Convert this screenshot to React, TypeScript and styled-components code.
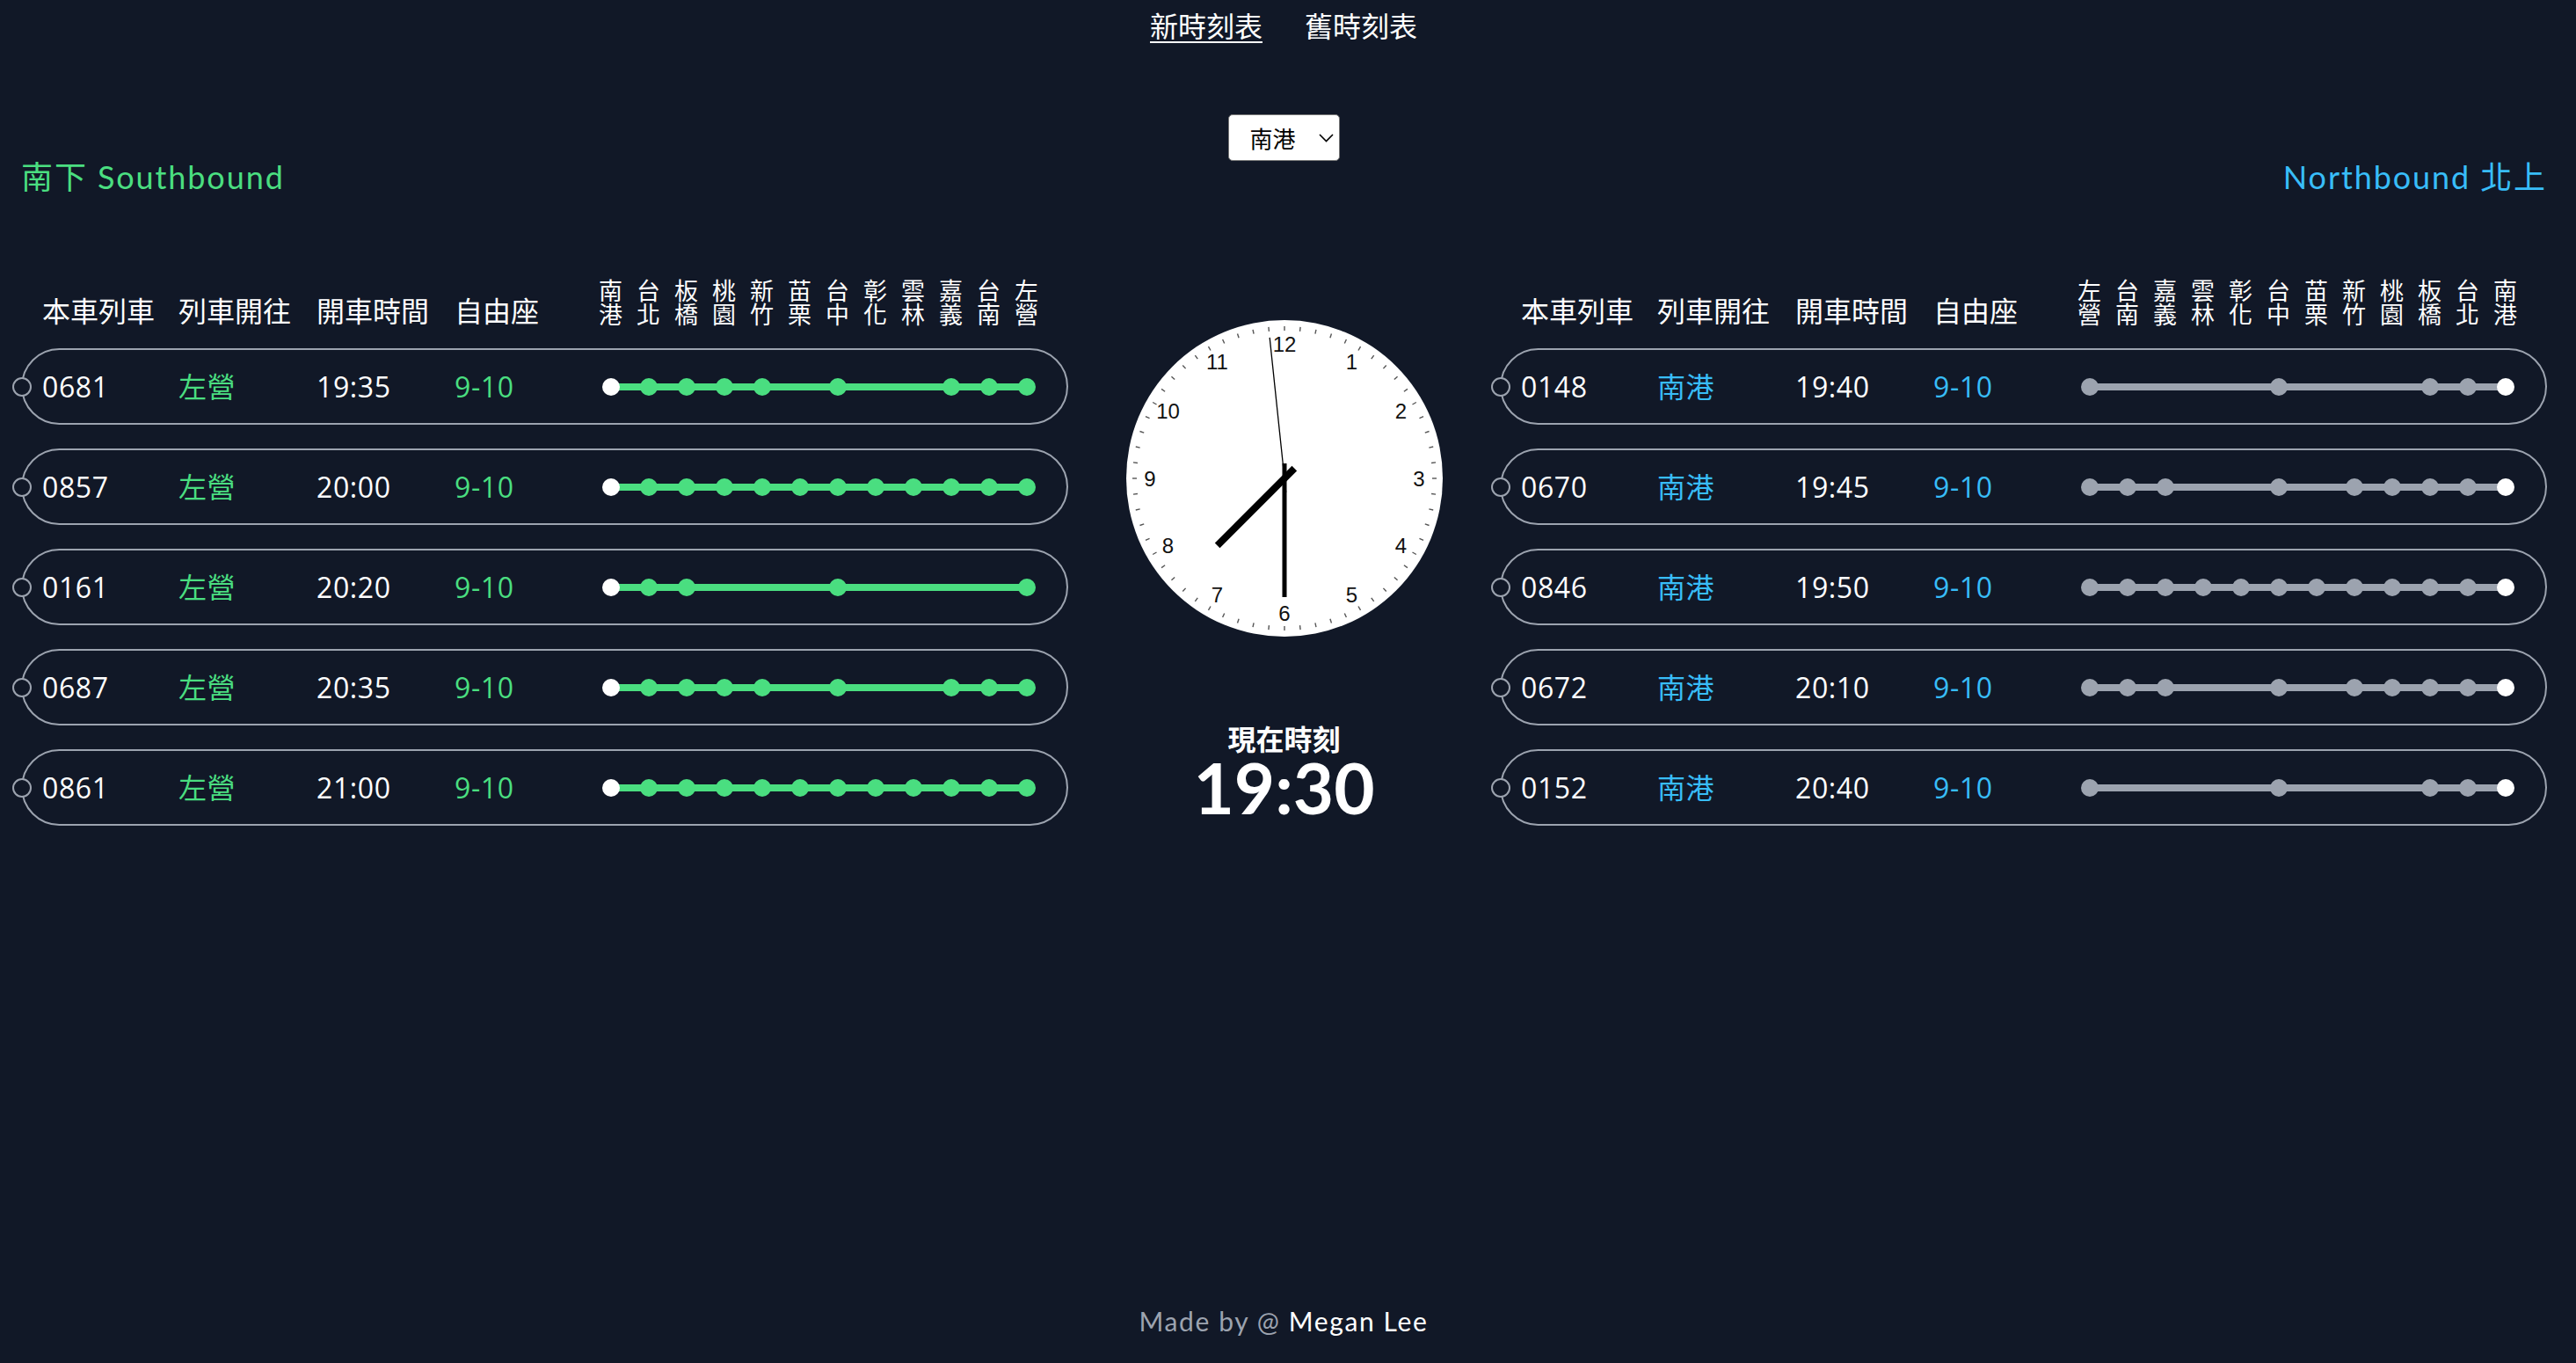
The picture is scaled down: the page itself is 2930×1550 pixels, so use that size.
import React from "react";
import styled, { createGlobalStyle } from "styled-components";

const GREEN = "#4ade80";
const BLUE = "#38bdf8";
const GRAY = "#9ca3af";
const BG = "#111827";
const CJK = `"Noto Sans CJK TC", "Noto Sans CJK SC", sans-serif`;

const GlobalStyle = createGlobalStyle`
  html, body { margin: 0; padding: 0; background: ${BG}; }
  body { font-family: "Lato", ${CJK}; color: #fff; }
  * { box-sizing: border-box; }
`;

const Page = styled.div`
  width: 2920px;
  min-height: 1550px;
  display: flex;
  flex-direction: column;
`;

const Nav = styled.nav`
  display: flex;
  justify-content: center;
  gap: 48px;
  padding-top: 9px;
`;

const NavLink = styled.a<{ $active?: boolean }>`
  font-family: ${CJK};
  font-size: 32px;
  line-height: 38px;
  color: #fff;
  text-decoration: none;
  border-bottom: 2px solid ${(p) => (p.$active ? "#fff" : "transparent")};
  cursor: pointer;
`;

const SelectRow = styled.div`
  display: flex;
  justify-content: center;
  margin-top: 81px;
`;

const SelectWrap = styled.div`
  position: relative;
  width: 127px;
  height: 53px;
`;

const StationSelect = styled.select`
  appearance: none;
  -webkit-appearance: none;
  width: 100%;
  height: 100%;
  margin: 0;
  border: 1px solid #767676;
  border-radius: 5px;
  background: #fff;
  color: #000;
  font-family: ${CJK};
  font-size: 26px;
  padding: 0 0 0 24px;
  outline: none;
`;

const Chevron = styled.svg`
  position: absolute;
  right: 7px;
  top: 22px;
  width: 17px;
  height: 10px;
  pointer-events: none;
`;

const Board = styled.main`
  display: grid;
  grid-template-columns: 1191px 491px 1191px;
  padding-left: 24px;
  align-items: start;
`;

const Panel = styled.section`
  display: flex;
  flex-direction: column;
`;

const DirTitle = styled.h2<{ $color: string; $align: "left" | "right" }>`
  margin: 0;
  font-family: "Lato", ${CJK};
  font-weight: 400;
  font-size: 36px;
  line-height: 36px;
  letter-spacing: 1.9px;
  color: ${(p) => p.$color};
  text-align: ${(p) => p.$align};
`;

const COLS = "155px 157px 157px 156px 516px";

const HeaderRow = styled.div`
  display: grid;
  grid-template-columns: ${COLS};
  align-items: end;
  padding-left: 24px;
  margin-top: 97px;
`;

const HeaderCell = styled.div`
  font-family: ${CJK};
  font-size: 32px;
  line-height: 32px;
  color: #fff;
  white-space: nowrap;
`;

const StationHeads = styled.div`
  display: grid;
  grid-template-columns: repeat(12, 43px);
  margin-bottom: -2px;
`;

const StationName = styled.div`
  display: flex;
  flex-direction: column;
  align-items: center;
  font-family: ${CJK};
  font-size: 27px;
  line-height: 27px;
  color: #fff;
`;

const Rows = styled.div`
  display: flex;
  flex-direction: column;
  gap: 27px;
  margin-top: 28px;
`;

const Row = styled.div`
  position: relative;
  height: 87px;
  border: 2px solid ${GRAY};
  border-radius: 9999px;
  display: grid;
  grid-template-columns: ${COLS};
  align-items: center;
  padding-left: 22px;
`;

const Pin = styled.span`
  position: absolute;
  left: -12px;
  top: 50%;
  width: 22px;
  height: 22px;
  margin-top: -11px;
  border-radius: 50%;
  border: 2px solid ${GRAY};
  background: ${BG};
`;

const Cell = styled.div<{ $color?: string }>`
  font-family: "Open Sans", ${CJK};
  font-size: 32px;
  line-height: 40px;
  letter-spacing: 0.6px;
  color: ${(p) => p.$color || "#fff"};
  white-space: nowrap;
`;

const Track = styled.div<{ $color: string }>`
  position: relative;
  display: grid;
  grid-template-columns: repeat(12, 43px);
  height: 20px;
  align-items: center;
  &::before {
    content: "";
    position: absolute;
    left: 21.5px;
    right: 21.5px;
    top: 6px;
    height: 8px;
    background: ${(p) => p.$color};
  }
`;

const Stop = styled.span<{ $color: string }>`
  position: relative;
  justify-self: center;
  width: 20px;
  height: 20px;
  border-radius: 50%;
  background: ${(p) => p.$color};
`;

const Center = styled.div`
  display: flex;
  flex-direction: column;
  align-items: center;
  padding-top: 181px;
`;

const ClockSvg = styled.svg`
  display: block;
  width: 360px;
  height: 360px;
`;

const NowLabel = styled.div`
  margin-top: 99px;
  font-family: ${CJK};
  font-weight: 700;
  font-size: 32px;
  line-height: 32px;
`;

const NowTime = styled.div`
  font-family: "Lato", sans-serif;
  font-weight: 700;
  font-size: 80px;
  line-height: 80px;
`;

const Footer = styled.footer`
  margin-top: auto;
  padding-bottom: 27px;
  text-align: center;
  font-family: "Lato", sans-serif;
  font-size: 30px;
  line-height: 42px;
  letter-spacing: 1.6px;
  color: ${GRAY};
`;

const Author = styled.span`
  color: #fff;
`;

const SOUTH = ["南港", "台北", "板橋", "桃園", "新竹", "苗栗", "台中", "彰化", "雲林", "嘉義", "台南", "左營"];
const NORTH = [...SOUTH].reverse();
const ALL = Array.from({ length: 12 }, (_, i) => i);
const A = [0, 1, 2, 3, 4, 6, 9, 10, 11];
const B = [0, 5, 9, 10, 11];
const C = [0, 1, 2, 5, 7, 8, 9, 10, 11];

type Train = { no: string; time: string; stops: number[] };

const southTrains: Train[] = [
  { no: "0681", time: "19:35", stops: A },
  { no: "0857", time: "20:00", stops: ALL },
  { no: "0161", time: "20:20", stops: [0, 1, 2, 6, 11] },
  { no: "0687", time: "20:35", stops: A },
  { no: "0861", time: "21:00", stops: ALL },
];

const northTrains: Train[] = [
  { no: "0148", time: "19:40", stops: B },
  { no: "0670", time: "19:45", stops: C },
  { no: "0846", time: "19:50", stops: ALL },
  { no: "0672", time: "20:10", stops: C },
  { no: "0152", time: "20:40", stops: B },
];

const Clock: React.FC = () => {
  const c = 180;
  const pt = (deg: number, r: number) => {
    const a = (deg * Math.PI) / 180;
    return [c + Math.sin(a) * r, c - Math.cos(a) * r];
  };
  const hand = (deg: number, len: number, tail: number, w: number) => {
    const [x1, y1] = pt(deg + 180, tail);
    const [x2, y2] = pt(deg, len);
    return <line x1={x1} y1={y1} x2={x2} y2={y2} stroke="#000" strokeWidth={w} />;
  };
  return (
    <ClockSvg viewBox="0 0 360 360">
      <circle cx={c} cy={c} r={180} fill="#fff" />
      {Array.from({ length: 60 }, (_, i) => {
        const [x1, y1] = pt(i * 6, 168);
        const [x2, y2] = pt(i * 6, 173);
        return <line key={i} x1={x1} y1={y1} x2={x2} y2={y2} stroke="#555" strokeWidth={1.4} />;
      })}
      {Array.from({ length: 12 }, (_, i) => {
        const n = i + 1;
        const [x, y] = pt(n * 30, 153);
        return (
          <text
            key={n}
            x={x}
            y={y + 8.5}
            textAnchor="middle"
            fontFamily='"Liberation Sans", Arial, sans-serif'
            fontSize={24}
            fill="#111"
          >
            {n}
          </text>
        );
      })}
      {hand(225, 108, 16, 8)}
      {hand(180, 135, 17, 5)}
      {hand(354, 161, 16, 1.3)}
    </ClockSvg>
  );
};

const DirectionPanel: React.FC<{
  title: string;
  align: "left" | "right";
  accent: string;
  lineColor: string;
  stations: string[];
  dest: string;
  trains: Train[];
  origin: number;
}> = ({ title, align, accent, lineColor, stations, dest, trains, origin }) => (
  <Panel>
    <DirTitle $color={accent} $align={align}>
      {title}
    </DirTitle>
    <HeaderRow>
      <HeaderCell>本車列車</HeaderCell>
      <HeaderCell>列車開往</HeaderCell>
      <HeaderCell>開車時間</HeaderCell>
      <HeaderCell>自由座</HeaderCell>
      <StationHeads>
        {stations.map((s) => (
          <StationName key={s}>
            <span>{s[0]}</span>
            <span>{s[1]}</span>
          </StationName>
        ))}
      </StationHeads>
    </HeaderRow>
    <Rows>
      {trains.map((t) => (
        <Row key={t.no}>
          <Pin />
          <Cell>{t.no}</Cell>
          <Cell $color={accent}>{dest}</Cell>
          <Cell>{t.time}</Cell>
          <Cell $color={accent}>9-10</Cell>
          <Track $color={lineColor}>
            {ALL.map((i) =>
              t.stops.includes(i) ? (
                <Stop key={i} $color={i === origin ? "#fff" : lineColor} />
              ) : (
                <span key={i} />
              )
            )}
          </Track>
        </Row>
      ))}
    </Rows>
  </Panel>
);

export default function App() {
  return (
    <Page>
      <GlobalStyle />
      <Nav>
        <NavLink $active>新時刻表</NavLink>
        <NavLink>舊時刻表</NavLink>
      </Nav>
      <SelectRow>
        <SelectWrap>
          <StationSelect defaultValue="南港">
            {SOUTH.map((s) => (
              <option key={s} value={s}>
                {s}
              </option>
            ))}
          </StationSelect>
          <Chevron viewBox="0 0 17 10">
            <polyline points="1,1 8.5,8.5 16,1" fill="none" stroke="#000" strokeWidth="1.6" />
          </Chevron>
        </SelectWrap>
      </SelectRow>
      <Board>
        <DirectionPanel
          title="南下 Southbound"
          align="left"
          accent={GREEN}
          lineColor={GREEN}
          stations={SOUTH}
          dest="左營"
          trains={southTrains}
          origin={0}
        />
        <Center>
          <Clock />
          <NowLabel>現在時刻</NowLabel>
          <NowTime>19:30</NowTime>
        </Center>
        <DirectionPanel
          title="Northbound 北上"
          align="right"
          accent={BLUE}
          lineColor={GRAY}
          stations={NORTH}
          dest="南港"
          trains={northTrains}
          origin={11}
        />
      </Board>
      <Footer>
        Made by @ <Author>Megan Lee</Author>
      </Footer>
    </Page>
  );
}
